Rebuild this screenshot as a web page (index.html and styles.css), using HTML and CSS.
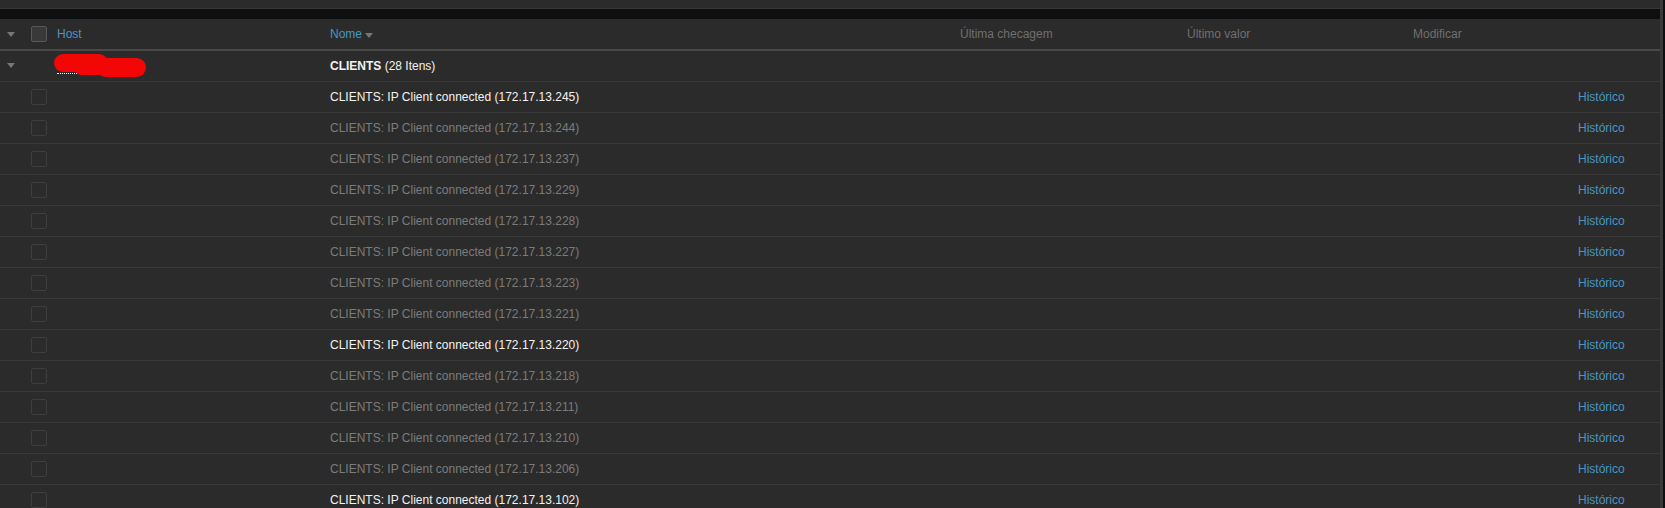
FILE: index.html
```html
<!DOCTYPE html>
<html lang="pt">
<head>
<meta charset="utf-8">
<title>Itens</title>
<link rel="stylesheet" href="styles.css">
</head>
<body>
<div class="page">
  <div class="topstrip"></div>
  <div class="band"></div>
  <div class="panel">
    <div class="row head">
      <div class="c-tog"><span class="tri"></span></div>
      <div class="c-chk"><span class="chk chk-head"></span></div>
      <div class="c-host"><span class="lnk">Host</span></div>
      <div class="c-name"><span class="lnk">Nome</span><span class="sort"></span></div>
      <div class="c-last">Última checagem</div>
      <div class="c-val">Último valor</div>
      <div class="c-mod">Modificar</div>
      <div class="c-hist"></div>
    </div>
    <div class="row group">
      <div class="c-tog"><span class="tri"></span></div>
      <div class="c-chk"></div>
      <div class="c-host">
        <span class="hostname"></span>
        <svg class="redact" width="96" height="26" viewBox="0 0 96 26">
          <rect x="0" y="0" width="54" height="18" rx="9" fill="#f20606"/>
          <rect x="42" y="4" width="50" height="19" rx="9.5" fill="#f20606"/>
          <rect x="20" y="2" width="34" height="19" rx="8" fill="#f20606"/>
        </svg>
      </div>
      <div class="c-name"><span><b>CLIENTS</b> (28 Itens)</span></div>
      <div class="c-last"></div>
      <div class="c-val"></div>
      <div class="c-mod"></div>
      <div class="c-hist"></div>
    </div>
    <div class="row item on"><div class="c-tog"></div><div class="c-chk"><span class="chk"></span></div><div class="c-host"></div><div class="c-name">CLIENTS: IP Client connected (172.17.13.245)</div><div class="c-last"></div><div class="c-val"></div><div class="c-mod"></div><div class="c-hist"><span class="lnk">Histórico</span></div></div>
    <div class="row item"><div class="c-tog"></div><div class="c-chk"><span class="chk"></span></div><div class="c-host"></div><div class="c-name">CLIENTS: IP Client connected (172.17.13.244)</div><div class="c-last"></div><div class="c-val"></div><div class="c-mod"></div><div class="c-hist"><span class="lnk">Histórico</span></div></div>
    <div class="row item"><div class="c-tog"></div><div class="c-chk"><span class="chk"></span></div><div class="c-host"></div><div class="c-name">CLIENTS: IP Client connected (172.17.13.237)</div><div class="c-last"></div><div class="c-val"></div><div class="c-mod"></div><div class="c-hist"><span class="lnk">Histórico</span></div></div>
    <div class="row item"><div class="c-tog"></div><div class="c-chk"><span class="chk"></span></div><div class="c-host"></div><div class="c-name">CLIENTS: IP Client connected (172.17.13.229)</div><div class="c-last"></div><div class="c-val"></div><div class="c-mod"></div><div class="c-hist"><span class="lnk">Histórico</span></div></div>
    <div class="row item"><div class="c-tog"></div><div class="c-chk"><span class="chk"></span></div><div class="c-host"></div><div class="c-name">CLIENTS: IP Client connected (172.17.13.228)</div><div class="c-last"></div><div class="c-val"></div><div class="c-mod"></div><div class="c-hist"><span class="lnk">Histórico</span></div></div>
    <div class="row item"><div class="c-tog"></div><div class="c-chk"><span class="chk"></span></div><div class="c-host"></div><div class="c-name">CLIENTS: IP Client connected (172.17.13.227)</div><div class="c-last"></div><div class="c-val"></div><div class="c-mod"></div><div class="c-hist"><span class="lnk">Histórico</span></div></div>
    <div class="row item"><div class="c-tog"></div><div class="c-chk"><span class="chk"></span></div><div class="c-host"></div><div class="c-name">CLIENTS: IP Client connected (172.17.13.223)</div><div class="c-last"></div><div class="c-val"></div><div class="c-mod"></div><div class="c-hist"><span class="lnk">Histórico</span></div></div>
    <div class="row item"><div class="c-tog"></div><div class="c-chk"><span class="chk"></span></div><div class="c-host"></div><div class="c-name">CLIENTS: IP Client connected (172.17.13.221)</div><div class="c-last"></div><div class="c-val"></div><div class="c-mod"></div><div class="c-hist"><span class="lnk">Histórico</span></div></div>
    <div class="row item on"><div class="c-tog"></div><div class="c-chk"><span class="chk"></span></div><div class="c-host"></div><div class="c-name">CLIENTS: IP Client connected (172.17.13.220)</div><div class="c-last"></div><div class="c-val"></div><div class="c-mod"></div><div class="c-hist"><span class="lnk">Histórico</span></div></div>
    <div class="row item"><div class="c-tog"></div><div class="c-chk"><span class="chk"></span></div><div class="c-host"></div><div class="c-name">CLIENTS: IP Client connected (172.17.13.218)</div><div class="c-last"></div><div class="c-val"></div><div class="c-mod"></div><div class="c-hist"><span class="lnk">Histórico</span></div></div>
    <div class="row item"><div class="c-tog"></div><div class="c-chk"><span class="chk"></span></div><div class="c-host"></div><div class="c-name">CLIENTS: IP Client connected (172.17.13.211)</div><div class="c-last"></div><div class="c-val"></div><div class="c-mod"></div><div class="c-hist"><span class="lnk">Histórico</span></div></div>
    <div class="row item"><div class="c-tog"></div><div class="c-chk"><span class="chk"></span></div><div class="c-host"></div><div class="c-name">CLIENTS: IP Client connected (172.17.13.210)</div><div class="c-last"></div><div class="c-val"></div><div class="c-mod"></div><div class="c-hist"><span class="lnk">Histórico</span></div></div>
    <div class="row item"><div class="c-tog"></div><div class="c-chk"><span class="chk"></span></div><div class="c-host"></div><div class="c-name">CLIENTS: IP Client connected (172.17.13.206)</div><div class="c-last"></div><div class="c-val"></div><div class="c-mod"></div><div class="c-hist"><span class="lnk">Histórico</span></div></div>
    <div class="row item on"><div class="c-tog"></div><div class="c-chk"><span class="chk"></span></div><div class="c-host"></div><div class="c-name">CLIENTS: IP Client connected (172.17.13.102)</div><div class="c-last"></div><div class="c-val"></div><div class="c-mod"></div><div class="c-hist"><span class="lnk">Histórico</span></div></div>
  </div>
</div>
</body>
</html>
```

FILE: styles.css
```css
html, body {
  margin: 0;
  padding: 0;
  height: 508px;
  overflow: hidden;
  background: #0e0f11;
}
.page {
  width: 1660px;
  font-family: "Liberation Sans", Arial, sans-serif;
  font-size: 12px;
  color: #f2f2f2;
  border-right: 3px solid #3a3a3a;
}
.topstrip {
  height: 8px;
  background: #2b2b2b;
  border-bottom: 1px solid #383838;
}
.band {
  height: 10px;
  background: #0e0f11;
}
.panel {
  background: #2b2b2b;
}
.row {
  display: grid;
  grid-template-columns: 32px 25px 273px 630px 227px 226px 165px 82px;
  align-items: center;
  height: 30px;
  border-bottom: 1px solid #383838;
}
.row.head {
  border-bottom: 2px solid #494949;
  color: #6f6f6f;
}
.c-tog, .c-chk, .c-host, .c-name, .c-last, .c-val, .c-mod, .c-hist {
  display: flex;
  align-items: center;
  height: 100%;
  white-space: nowrap;
}
.c-chk {
  margin-left: -1px;
}
.c-host {
  position: relative;
}
.tri {
  margin-left: 7px;
  margin-top: 1px;
  width: 0;
  height: 0;
  border-left: 4px solid transparent;
  border-right: 4px solid transparent;
  border-top: 5px solid #767676;
}
.group .tri {
  margin-top: -2px;
}
.chk {
  box-sizing: border-box;
  width: 16px;
  height: 16px;
  border: 1px solid #3e3e3e;
  border-radius: 2px;
  background: #2b2b2b;
}
.chk-head {
  background: #393939;
  border-color: #585858;
}
.lnk {
  color: #4796c4;
}
.sort {
  display: inline-block;
  margin-left: 3px;
  margin-top: 2px;
  width: 0;
  height: 0;
  border-left: 4px solid transparent;
  border-right: 4px solid transparent;
  border-top: 5px solid #767676;
}
.group .c-name {
  color: #f2f2f2;
}
.item .c-name {
  color: #7b7b7b;
}
.item.on .c-name {
  color: #f2f2f2;
}
.hostname {
  width: 40px;
  margin-top: 14px;
  border-bottom: 1px dotted #ffffff;
}
.redact {
  position: absolute;
  left: -3px;
  top: 3px;
}
```
